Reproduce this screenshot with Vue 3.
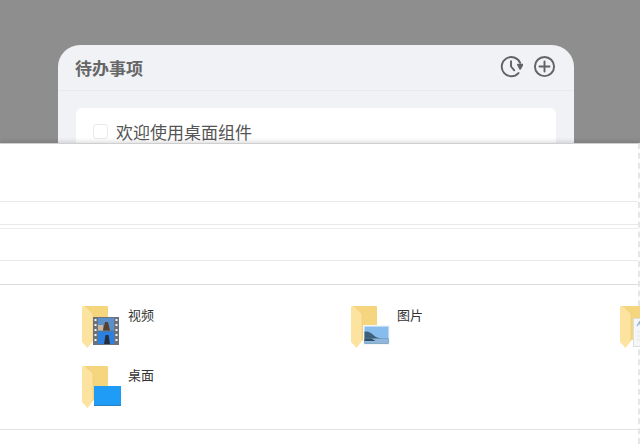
<template>
  <div class="page">
    <section class="backdrop">
      <div class="widget">
        <header class="widget-head">
          <h1 class="widget-title">待办事项</h1>
          <div class="widget-actions">
            <svg class="icon" viewBox="0 0 24 24" fill="none" stroke="#5f6368" stroke-width="2" stroke-linecap="round" stroke-linejoin="round">
              <path d="M19.300 18.800A10 10 0 1 1 21 8.200" />
              <path d="M11.500 6.500v5.500l3.400 4" />
              <path d="M18.800 10h4.600L21 14.400z" fill="#5f6368" />
            </svg>
            <svg class="icon" viewBox="0 0 24 24" fill="none" stroke="#5f6368" stroke-width="2" stroke-linecap="round">
              <circle cx="12" cy="12" r="10" />
              <path d="M12 6.800v10.400M6.800 12h10.400" />
            </svg>
          </div>
        </header>
        <div class="widget-body">
          <div class="todo">
            <span class="check"></span>
            <span class="todo-text">欢迎使用桌面组件</span>
          </div>
        </div>
      </div>
    </section>

    <section class="explorer">
      <div class="band band-title"></div>
      <div class="band band-tabs"></div>
      <div class="band band-gap"></div>
      <div class="band band-path"></div>
      <div class="band band-search"></div>

      <div class="files">
        <div v-for="file in files" :key="file.name + file.kind" class="file">
          <div class="folder">
            <svg class="folder-art" viewBox="0 0 26 42">
              <path d="M1 0h24a1 1 0 0 1 1 1v33H9z" fill="#f5d67e" />
              <path d="M0 1a1 1 0 0 1 1-1h2l8 7.500V35l-5.500 7L0 36z" fill="#fce4a0" />
              <path d="M3 0l8 7.500V35" fill="none" stroke="#edc96f" stroke-width=".6" />
            </svg>

            <svg v-if="file.kind === 'video'" class="badge" viewBox="0 0 26 28">
              <rect width="26" height="28" fill="#6b727c" />
              <rect x="5" y="1" width="16" height="12.500" fill="#5a90cc" />
              <rect x="5" y="14.500" width="16" height="12.500" fill="#2c80e2" />
              <path d="M10 13.500 12 5h3l2 8.500z" fill="#574030" />
              <path d="M11 27l1.500-9h3l1.500 9z" fill="#282d38" />
              <path d="M5 8h5v5.500H5z" fill="#cdb698" />
              <path v-for="y in holes" :key="y" :d="`M1.500 ${y}h2v2h-2zM22.500 ${y}h2v2h-2z`" fill="#f3f3f3" />
            </svg>

            <svg v-else-if="file.kind === 'image'" class="badge badge-image" viewBox="0 0 27 20">
              <rect width="27" height="20" fill="#f4f6f8" />
              <rect x="1.500" y="1.500" width="24" height="17" fill="#86bdec" />
              <path d="M1.500 6.500c4-.5 7 1.500 10 4.500s9 2.500 14 2.500v5h-24z" fill="#3d5f78" />
              <rect x="1.500" y="13.500" width="24" height="5" fill="#8fb7dc" />
              <path d="M1.500 13.500h7l4 2.500H1.500z" fill="#2f4e68" />
            </svg>

            <svg v-else-if="file.kind === 'doc'" class="badge badge-doc" viewBox="0 0 26 29">
              <rect x=".5" y=".5" width="25" height="28" fill="#f5f6f7" stroke="#dcdfe2" />
              <path d="M4 8l2.500-4L8 9" stroke="#8fb1d6" fill="none" stroke-width="1.200" />
              <path d="M4 14h16M4 18h16M4 22h12" stroke="#e2e4e6" />
            </svg>

            <svg v-else class="badge badge-desktop" viewBox="0 0 27 20">
              <rect width="27" height="20" fill="#1f9cf5" />
              <path d="M0 19.500h27" stroke="#2c7fbd" />
            </svg>
          </div>
          <span class="file-name">{{ file.name }}</span>
        </div>
      </div>
    </section>
  </div>
</template>

<script setup>
const holes = [2, 7, 12, 17, 22]
const files = [
  { name: '视频', kind: 'video' },
  { name: '图片', kind: 'image' },
  { name: '', kind: 'doc' },
  { name: '桌面', kind: 'desktop' },
]
</script>

<style>
html, body { margin: 0; background: #fff; overflow: hidden; }
</style>

<style scoped>
.page {
  width: 640px;
  height: 444px;
  overflow: hidden;
  display: flex;
  flex-direction: column;
  font-family: "Noto Sans CJK SC", "Liberation Sans", sans-serif;
}
.backdrop {
  height: 143px;
  flex: none;
  overflow: hidden;
  background: #8e8e8e;
  padding: 45px 66px 0 58px;
  box-sizing: border-box;
}
.widget {
  height: 140px;
  background: #f1f2f6;
  border-radius: 22px 22px 0 0;
}
.widget-head {
  height: 46px;
  box-sizing: border-box;
  border-bottom: 1px solid #e8e9ec;
  padding: 0 18px 0 17px;
  display: flex;
  align-items: center;
  justify-content: space-between;
}
.widget-title {
  margin: 0;
  font-size: 17px;
  font-weight: 700;
  color: #666;
}
.widget-actions {
  display: flex;
  gap: 10px;
  margin-top: -3px;
}
.icon { width: 23px; height: 23px; display: block; }
.widget-body { padding: 17px 18px 0; }
.todo {
  height: 70px;
  background: #fff;
  border-radius: 6px;
  padding: 16px 17px;
  box-sizing: border-box;
  display: flex;
  align-items: flex-start;
  gap: 8px;
}
.check {
  width: 15px;
  height: 15px;
  flex: none;
  border: 1px solid #e8e9ec;
  border-radius: 3px;
  box-sizing: border-box;
}
.todo-text {
  font-size: 17px;
  line-height: 15px;
  color: #555;
}
.explorer {
  flex: 1;
  background: #fff;
  border-top: 1px solid #cfcfcf;
  border-right: 2px dashed #e6e6e6;
  box-sizing: border-box;
  display: flex;
  flex-direction: column;
  min-height: 0;
  position: relative;
  box-shadow: 0 -2px 4px rgba(0, 0, 0, 0.12);
}
.band { flex: none; box-sizing: border-box; border-bottom: 1px solid #e9e9e9; }
.band-title { height: 58px; }
.band-tabs { height: 23px; }
.band-gap { height: 4px; border-bottom-color: #ececec; }
.band-path { height: 32px; }
.band-search { height: 24px; border-bottom-color: #dcdcdc; }
.files {
  flex: none;
  height: 145px;
  box-sizing: border-box;
  padding-top: 21px;
  padding-left: 82px;
  display: grid;
  grid-template-columns: repeat(3, 269px);
  grid-auto-rows: 60px;
  border-bottom: 1px solid #e2e2e2;
}
.file { display: flex; align-items: flex-start; gap: 9px; }
.folder {
  width: 37px;
  height: 42px;
  flex: none;
  position: relative;
}
.folder-art { width: 26px; height: 42px; display: block; }
.badge { position: absolute; left: 11px; top: 11px; width: 26px; height: 28px; }
.badge-image { left: 12px; top: 19px; width: 27px; height: 20px; }
.badge-doc { left: 13px; top: 12px; height: 29px; }
.badge-desktop { left: 12px; top: 20px; width: 27px; height: 20px; }
.file-name {
  font-size: 13px;
  line-height: 18px;
  color: #333;
}
</style>
